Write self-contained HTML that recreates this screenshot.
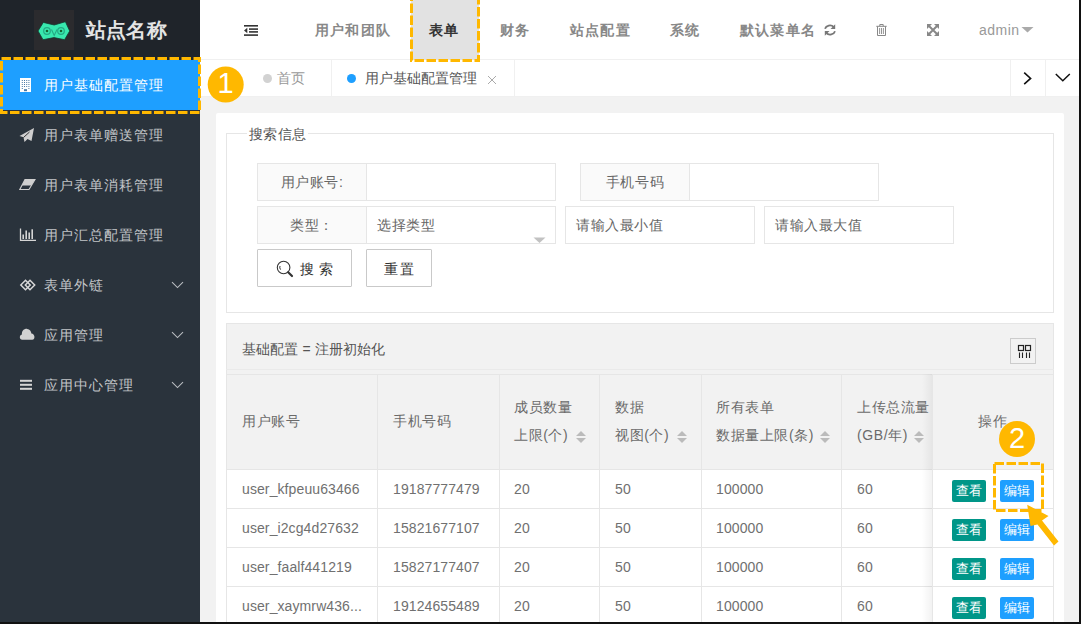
<!DOCTYPE html>
<html><head><meta charset="utf-8">
<style>
*{box-sizing:border-box;margin:0;padding:0}
html,body{width:1081px;height:624px;overflow:hidden;background:#111;font-family:"Liberation Sans",sans-serif;font-size:14px;color:#666}
#app{position:absolute;left:0;top:0;width:1079px;height:622px;overflow:hidden;background:#f2f2f2}
.a{position:absolute}
.side{left:0;top:0;width:200px;height:622px;background:#2a333c}
.logo{left:0;top:0;width:200px;height:60px;background:#1f242a}
.sq{left:34px;top:10px;width:40px;height:40px;background:#2b2b2e}
.logo .t{left:86px;top:17px;font-size:20px;font-weight:bold;color:#e4e4e4;letter-spacing:.2px;white-space:nowrap}
.mi{position:absolute;left:0;width:200px;height:50px;line-height:50px;color:#c2c5c8;font-size:14px;padding-left:44px;letter-spacing:.95px;white-space:nowrap}
.mi.on{background:#1e9fff;color:#fff}
.arr{position:absolute;left:172px;top:19px;width:8px;height:8px;border-right:1px solid #9aa;border-bottom:1px solid #9aa;transform:rotate(45deg)}
.hdr{left:200px;top:0;width:879px;height:60px;background:#fff;border-bottom:1px solid #f0f0f0}
.nav{position:absolute;top:0;height:60px;line-height:60px;font-size:14px;color:#888;font-weight:bold;letter-spacing:1.2px;white-space:nowrap}
.tabs{left:200px;top:60px;width:879px;height:37px;background:#fff;border-bottom:1px solid #f0f0f0}
.tab{position:absolute;top:0;height:36px;line-height:36px;font-size:14px;color:#555;white-space:nowrap}
.lbl{position:absolute;background:#fafafa;border:1px solid #e6e6e6;text-align:center;color:#666;font-size:14px;line-height:36px;letter-spacing:.6px}
.inp{position:absolute;background:#fff;border:1px solid #e6e6e6;color:#666;font-size:14px;padding-left:10px;line-height:36px;letter-spacing:.6px}
.btn{position:absolute;border:1px solid #c9c9c9;background:#fff;color:#555;font-size:14px;text-align:center;line-height:38px;border-radius:1px}
.ln{position:absolute;background:#e6e6e6}
.cell{position:absolute;font-size:14px;color:#707070;white-space:nowrap;letter-spacing:.1px}
.hc{position:absolute;font-size:14px;color:#6a6a6a;white-space:nowrap;letter-spacing:.6px;line-height:28px}
.sort{position:absolute;width:10px;height:12px}
.sort:before{content:"";position:absolute;left:0;top:0;border:5px solid transparent;border-top:0;border-bottom:5px solid #bbb}
.sort:after{content:"";position:absolute;left:0;top:7px;border:5px solid transparent;border-bottom:0;border-top:5px solid #bbb}
.bv{position:absolute;width:34px;height:22px;border-radius:2px;background:#009688;color:#fff;font-size:13px;text-align:center;line-height:22px}
.be{position:absolute;width:34px;height:22px;border-radius:2px;background:#1e9fff;color:#fff;font-size:13px;text-align:center;line-height:22px}
.dash{position:absolute;border:3px dashed #ffb800}
.num{position:absolute;width:36px;height:36px;border-radius:50%;background:#ffb800;color:#fff;font-size:28px;text-align:center;line-height:36px}
</style></head><body>
<div id="app">
 <!-- sidebar -->
 <div class="a side">
  <div class="a logo"><div class="a sq"></div><svg class="a" style="left:34px;top:10px" width="40" height="40" viewBox="34 10 40 40"><path d="M38 31 L43.3 22.4 L54.2 25 L65.4 21.7 L69.7 31 L64.6 39.7 L54 37.6 L43 39.7 Z" fill="#38e8ae" stroke="#123a30" stroke-width="0.8"/><circle cx="47" cy="31" r="3.3" fill="none" stroke="#25a883" stroke-width="1.2"/><circle cx="61" cy="31" r="3.3" fill="none" stroke="#25a883" stroke-width="1.2"/><circle cx="47" cy="31" r="1.3" fill="#163"/><circle cx="61" cy="31" r="1.3" fill="#163"/><path d="M51.5 29.5 L54.2 35.5 L57 29.5" fill="none" stroke="#25a883" stroke-width="1.1"/></svg><div class="a t">站点名称</div></div>
  <div class="mi on" style="top:60px"><svg class="a" style="left:20px;top:18px" width="12" height="14" viewBox="0 0 12 14"><rect x="0" y="0" width="11" height="14" fill="#fff"/><g fill="#4a7aa6"><rect x="1.8" y="2.0" width="1" height="1"/><rect x="1.8" y="4.0" width="1" height="1"/><rect x="1.8" y="6.0" width="1" height="1"/><rect x="1.8" y="8.0" width="1" height="1"/><rect x="4.0" y="2.0" width="1" height="1"/><rect x="4.0" y="4.0" width="1" height="1"/><rect x="4.0" y="6.0" width="1" height="1"/><rect x="4.0" y="8.0" width="1" height="1"/><rect x="6.2" y="2.0" width="1" height="1"/><rect x="6.2" y="4.0" width="1" height="1"/><rect x="6.2" y="6.0" width="1" height="1"/><rect x="6.2" y="8.0" width="1" height="1"/><rect x="8.4" y="2.0" width="1" height="1"/><rect x="8.4" y="4.0" width="1" height="1"/><rect x="8.4" y="6.0" width="1" height="1"/><rect x="8.4" y="8.0" width="1" height="1"/><rect x="1.8" y="10" width="1" height="1"/><rect x="8.4" y="10" width="1" height="1"/><rect x="4" y="11.2" width="3" height="2"/></g></svg>用户基础配置管理</div>
  <div class="mi" style="top:110px"><svg class="a" style="left:19px;top:18px" width="16" height="15" viewBox="0 0 16 15"><path d="M15 0 L0.5 8 L4.5 9.2 L5.5 14 L8.5 11 L12.5 13 Z" fill="#cfcfcf"/><path d="M4.5 9.5 L10.5 4" stroke="#222" stroke-width="0.9"/></svg>用户表单赠送管理</div>
  <div class="mi" style="top:160px"><svg class="a" style="left:19px;top:19px" width="17" height="12" viewBox="0 0 17 12"><path d="M6 0.5 L16 0.5 L10 10.5 L0.8 10.5 Z" fill="none" stroke="#cfcfcf" stroke-width="1.1"/><path d="M6 0.5 L16 0.5 L12.3 6.5 L3 6.5 Z" fill="#cfcfcf"/></svg>用户表单消耗管理</div>
  <div class="mi" style="top:210px"><svg class="a" style="left:19px;top:18px" width="18" height="14" viewBox="0 0 18 14"><path d="M1.5 0.5 V12.3 H17" fill="none" stroke="#d5d5d5" stroke-width="1.3"/><rect x="3.4" y="6.5" width="1.6" height="4.5" fill="#d5d5d5"/><rect x="6.4" y="2.5" width="1.6" height="8.5" fill="#d5d5d5"/><rect x="9.4" y="4.5" width="1.6" height="6.5" fill="#d5d5d5"/><rect x="12.4" y="1.3" width="1.6" height="9.7" fill="#d5d5d5"/></svg>用户汇总配置管理</div>
  <div class="mi" style="top:260px"><svg class="a" style="left:19px;top:19px" width="18" height="13" viewBox="0 0 18 13"><path d="M1.8 6 L6.5 1.3 L11.2 6 L6.5 10.7 Z" fill="none" stroke="#d8d8d8" stroke-width="1.5"/><path d="M6.3 6 L11 1.3 L15.7 6 L11 10.7 Z" fill="none" stroke="#d8d8d8" stroke-width="1.5"/></svg>表单外链<svg class="a" style="left:171px;top:21px" width="13" height="8" viewBox="0 0 13 8"><path d="M1 1.2 L6.5 6.6 L12 1.2" fill="none" stroke="#b8bcc0" stroke-width="1.1"/></svg></div>
  <div class="mi" style="top:310px"><svg class="a" style="left:19px;top:18px" width="17" height="13" viewBox="0 0 17 13"><path d="M3.2 11.8 C0.3 11.8 0 7.3 2.9 6.6 C2.6 2.8 5.3 0.6 8.2 0.9 C10.8 1.2 12.2 3.2 12.4 5.6 C15.8 5.5 16.8 11.8 13.2 11.8 Z" fill="#d2d2d2"/></svg>应用管理<svg class="a" style="left:171px;top:21px" width="13" height="8" viewBox="0 0 13 8"><path d="M1 1.2 L6.5 6.6 L12 1.2" fill="none" stroke="#b8bcc0" stroke-width="1.1"/></svg></div>
  <div class="mi" style="top:360px"><svg class="a" style="left:20px;top:19px" width="13" height="12" viewBox="0 0 13 12"><rect x="0" y="0.8" width="12" height="2" fill="#d5d5d5"/><rect x="0" y="4.8" width="12" height="2" fill="#d5d5d5"/><rect x="0" y="8.8" width="12" height="2" fill="#d5d5d5"/></svg>应用中心管理<svg class="a" style="left:171px;top:21px" width="13" height="8" viewBox="0 0 13 8"><path d="M1 1.2 L6.5 6.6 L12 1.2" fill="none" stroke="#b8bcc0" stroke-width="1.1"/></svg></div>
 </div>
 <!-- header -->
 <div class="a hdr">
  <div class="a" style="left:211px;top:0;width:68px;height:60px;background:#e2e2e2"></div>
  <div class="nav" style="left:115px">用户和团队</div>
  <div class="nav" style="left:229px;color:#333">表单</div>
  <div class="nav" style="left:300px">财务</div>
  <div class="nav" style="left:370px">站点配置</div>
  <div class="nav" style="left:470px">系统</div>
  <div class="nav" style="left:540px">默认菜单名</div>
  <div class="nav" style="left:779px;font-weight:normal;color:#999;letter-spacing:.5px">admin</div>
  <svg class="a" style="left:44px;top:25px" width="14" height="11" viewBox="0 0 14 11"><rect x="0" y="0" width="14" height="1.6" fill="#333"/><rect x="5" y="3.3" width="9" height="1.6" fill="#333"/><rect x="5" y="6.1" width="9" height="1.6" fill="#333"/><rect x="0" y="9.3" width="14" height="1.6" fill="#333"/><path d="M0 5.5 L3.3 2.8 L3.3 8.2 Z" fill="#333"/></svg>
  <svg class="a" style="left:624px;top:24px" width="12" height="12" viewBox="0 0 12 12"><path d="M1 4.8 C2 1.5 7 0 9.8 3.2" fill="none" stroke="#777" stroke-width="1.8"/><path d="M11.2 0.3 V5 H6.5 Z" fill="#777"/><path d="M11 7.2 C10 10.5 5 12 2.2 8.8" fill="none" stroke="#777" stroke-width="1.8"/><path d="M0.8 11.7 V7 H5.5 Z" fill="#777"/></svg>
  <svg class="a" style="left:676px;top:24px" width="11" height="12" viewBox="0 0 11 12"><path d="M0.3 2.3 H10.7" stroke="#888" stroke-width="1"/><path d="M3.8 2.3 V0.5 H7.2 V2.3" fill="none" stroke="#888" stroke-width="1"/><path d="M1.5 2.3 V11.5 H9.5 V2.3" fill="none" stroke="#888" stroke-width="1"/><path d="M3.6 4 V10 M5.5 4 V10 M7.4 4 V10" stroke="#888" stroke-width="0.9"/></svg>
  <svg class="a" style="left:727px;top:24px" width="12" height="12" viewBox="0 0 12 12"><g fill="#888"><path d="M0 0 H5 L0 5 Z"/><path d="M12 0 V5 L7 0 Z"/><path d="M0 12 V7 L5 12 Z"/><path d="M12 12 H7 L12 7 Z"/></g><path d="M1.5 1.5 L10.5 10.5 M10.5 1.5 L1.5 10.5" stroke="#888" stroke-width="2"/></svg>
  <svg class="a" style="left:821px;top:27px" width="13" height="6" viewBox="0 0 13 6"><path d="M0.5 0 H12.5 L6.5 5.5 Z" fill="#aaa"/></svg>
 </div>
 <!-- tabs -->
 <div class="a tabs">
  <div class="ln" style="left:131px;top:0;width:1px;height:36px;background:#f0f0f0"></div>
  <div class="ln" style="left:314px;top:0;width:1px;height:36px;background:#f0f0f0"></div>
  <div class="ln" style="left:810px;top:0;width:1px;height:36px;background:#f0f0f0"></div>
  <div class="ln" style="left:845px;top:0;width:1px;height:36px;background:#f0f0f0"></div>
  <div class="a" style="left:63px;top:14px;width:9px;height:9px;border-radius:50%;background:#d2d2d2"></div>
  <div class="tab" style="left:77px;color:#999">首页</div>
  <div class="a" style="left:147px;top:14px;width:9px;height:9px;border-radius:50%;background:#1e9fff"></div>
  <div class="tab" style="left:165px">用户基础配置管理</div>
  <svg class="a" style="left:287px;top:15px" width="10" height="10" viewBox="0 0 10 10"><path d="M1 1 L9 9 M9 1 L1 9" stroke="#aaa" stroke-width="1"/></svg>
  <svg class="a" style="left:823px;top:12px" width="10" height="13" viewBox="0 0 10 13"><path d="M1.2 0.6 L7.6 6.4 L1.2 12.2" fill="none" stroke="#111" stroke-width="1.6"/></svg>
  <svg class="a" style="left:855px;top:13px" width="16" height="9" viewBox="0 0 16 9"><path d="M0.8 1 L7.8 7.8 L14.8 1" fill="none" stroke="#111" stroke-width="1.5"/></svg>
 </div>
 <!-- content card -->
 <div class="a" style="left:216px;top:113px;width:848px;height:520px;background:#fff;border-radius:2px"></div>
 <div class="a" style="left:226px;top:133px;width:828px;height:180px;border:1px solid #e6e6e6"></div>
 <div class="a" style="left:247px;top:126px;width:61px;height:18px;background:#fff;font-size:14px;color:#555;padding-left:2px;letter-spacing:.3px;white-space:nowrap">搜索信息</div>
 <div class="lbl" style="left:257px;top:163px;width:110px;height:38px">用户账号:</div>
 <div class="inp" style="left:366px;top:163px;width:190px;height:38px"></div>
 <div class="lbl" style="left:580px;top:163px;width:110px;height:38px">手机号码</div>
 <div class="inp" style="left:689px;top:163px;width:190px;height:38px"></div>
 <div class="lbl" style="left:257px;top:206px;width:110px;height:38px">类型：</div>
 <div class="inp" style="left:366px;top:206px;width:190px;height:38px">选择类型</div>
 <svg class="a" style="left:533px;top:237px" width="13" height="7" viewBox="0 0 13 7"><path d="M0.5 0.5 H12.5 L6.5 6 Z" fill="#c2c2c2"/></svg>
 <div class="inp" style="left:565px;top:206px;width:190px;height:38px">请输入最小值</div>
 <div class="inp" style="left:764px;top:206px;width:190px;height:38px">请输入最大值</div>
 <div class="btn" style="left:257px;top:249px;width:95px;height:38px;text-align:left;padding-left:42px;color:#333;letter-spacing:.5px">搜 索</div>
 <svg class="a" style="left:276px;top:260px" width="19" height="18" viewBox="0 0 19 18"><circle cx="7.6" cy="7.5" r="6.3" fill="none" stroke="#333" stroke-width="1.1"/><path d="M4 6 A3.5 3.5 0 0 0 4.6 9.6" fill="none" stroke="#333" stroke-width="1"/><path d="M12.2 12.2 L16 16" stroke="#333" stroke-width="2.2" stroke-linecap="round"/></svg>
 <div class="btn" style="left:366px;top:249px;width:66px;height:38px;color:#333;letter-spacing:1.5px;padding-left:1px">重置</div>
 <!-- table -->
 <div class="a" style="left:226px;top:323px;width:828px;height:300px;border:1px solid #e6e6e6;background:#fff"></div>
 <div class="a" style="left:227px;top:324px;width:826px;height:46px;background:#f2f2f2;border-bottom:1px solid #e6e6e6"></div>
 <div class="cell" style="left:242px;top:341px;color:#555">基础配置 = 注册初始化</div>
 <div class="a" style="left:1010px;top:338px;width:26px;height:26px;border:1px solid #ccc;background:#f2f2f2"></div>
 <svg class="a" style="left:1017px;top:344px" width="15" height="15" viewBox="0 0 15 15"><rect x="1.5" y="1.5" width="5" height="5" fill="none" stroke="#222" stroke-width="1.2"/><rect x="8.5" y="1.5" width="5" height="5" fill="none" stroke="#222" stroke-width="1.2"/><path d="M2.5 8.5 V14 M5.5 8.5 V14 M9.5 8.5 V14 M12.5 8.5 V14" stroke="#222" stroke-width="1.1"/></svg>
 <div class="a" style="left:227px;top:370px;width:826px;height:100px;background:#f2f2f2"></div>
 <div class="ln" style="left:226px;top:369px;width:828px;height:1px;background:#eaeaea"></div>
 <div class="ln" style="left:226px;top:374px;width:828px;height:1px"></div>
 <div class="ln" style="left:226px;top:469px;width:828px;height:1px"></div>
 <div class="ln" style="left:226px;top:508px;width:828px;height:1px"></div>
 <div class="ln" style="left:226px;top:547px;width:828px;height:1px"></div>
 <div class="ln" style="left:226px;top:586px;width:828px;height:1px"></div>
 <div class="ln" style="left:377px;top:374px;width:1px;height:260px"></div>
 <div class="ln" style="left:499px;top:374px;width:1px;height:260px"></div>
 <div class="ln" style="left:599px;top:374px;width:1px;height:260px"></div>
 <div class="ln" style="left:701px;top:374px;width:1px;height:260px"></div>
 <div class="ln" style="left:841px;top:374px;width:1px;height:260px"></div>
 <div class="a" style="left:922px;top:374px;width:10px;height:260px;background:linear-gradient(to right,rgba(0,0,0,0),rgba(0,0,0,.05))"></div>
 <div class="ln" style="left:932px;top:374px;width:1px;height:260px"></div>

 <div class="sort" style="left:576px;top:431px"></div><div class="sort" style="left:677px;top:431px"></div><div class="sort" style="left:820px;top:431px"></div><div class="sort" style="left:914px;top:431px"></div>
 <div class="hc" style="left:242px;top:407px">用户账号</div>
 <div class="hc" style="left:393px;top:407px">手机号码</div>
 <div class="hc" style="left:514px;top:393px">成员数量<br>上限(个)</div>
 <div class="hc" style="left:615px;top:393px">数据<br>视图(个)</div>
 <div class="hc" style="left:716px;top:393px">所有表单<br>数据量上限(条)</div>
 <div class="hc" style="left:857px;top:393px">上传总流量<br>(GB/年)</div>
 <div class="hc" style="left:978px;top:407px">操作</div>

 <div class="cell" style="left:242px;top:481px">user_kfpeuu63466</div>
 <div class="cell" style="left:393px;top:481px">19187777479</div>
 <div class="cell" style="left:514px;top:481px">20</div>
 <div class="cell" style="left:615px;top:481px">50</div>
 <div class="cell" style="left:716px;top:481px">100000</div>
 <div class="cell" style="left:857px;top:481px">60</div>
 <div class="bv" style="left:952px;top:480px">查看</div><div class="be" style="left:1000px;top:480px">编辑</div>

 <div class="cell" style="left:242px;top:520px">user_i2cg4d27632</div>
 <div class="cell" style="left:393px;top:520px">15821677107</div>
 <div class="cell" style="left:514px;top:520px">20</div>
 <div class="cell" style="left:615px;top:520px">50</div>
 <div class="cell" style="left:716px;top:520px">100000</div>
 <div class="cell" style="left:857px;top:520px">60</div>
 <div class="bv" style="left:952px;top:519px">查看</div><div class="be" style="left:1000px;top:519px">编辑</div>

 <div class="cell" style="left:242px;top:559px">user_faalf441219</div>
 <div class="cell" style="left:393px;top:559px">15827177407</div>
 <div class="cell" style="left:514px;top:559px">20</div>
 <div class="cell" style="left:615px;top:559px">50</div>
 <div class="cell" style="left:716px;top:559px">100000</div>
 <div class="cell" style="left:857px;top:559px">60</div>
 <div class="bv" style="left:952px;top:558px">查看</div><div class="be" style="left:1000px;top:558px">编辑</div>

 <div class="cell" style="left:242px;top:598px">user_xaymrw436...</div>
 <div class="cell" style="left:393px;top:598px">19124655489</div>
 <div class="cell" style="left:514px;top:598px">20</div>
 <div class="cell" style="left:615px;top:598px">50</div>
 <div class="cell" style="left:716px;top:598px">100000</div>
 <div class="cell" style="left:857px;top:598px">60</div>
 <div class="bv" style="left:952px;top:597px">查看</div><div class="be" style="left:1000px;top:597px">编辑</div>

 <!-- annotations -->
 <svg class="a" style="left:0;top:0" width="1079" height="622">
  <g fill="none" stroke="#ffb800" stroke-width="3" stroke-dasharray="9.5 2.5">
   <rect x="1.5" y="58.5" width="198" height="54"/>
   <rect x="411.5" y="-10" width="67" height="70.5"/>
   <rect x="994.5" y="463.5" width="48" height="47"/>
  </g>
  <circle cx="225.7" cy="84.5" r="18" fill="#ffb800"/>
  <circle cx="1017" cy="439" r="18" fill="#ffb800"/>
  <path d="M1027.2 504.7 L1048.5 516 L1042 520.5 L1058.5 541.5 L1054 545.5 L1037.5 524.5 L1030.5 526 Z" fill="#ffb800"/>
 </svg>
 <div class="a" style="left:207px;top:65px;width:37px;height:36px;color:#fff;font-size:29px;text-align:center;line-height:37px">1</div>
 <div class="a" style="left:999px;top:420px;width:36px;height:36px;color:#fff;font-size:29px;text-align:center;line-height:37px">2</div>
</div>
</body></html>
